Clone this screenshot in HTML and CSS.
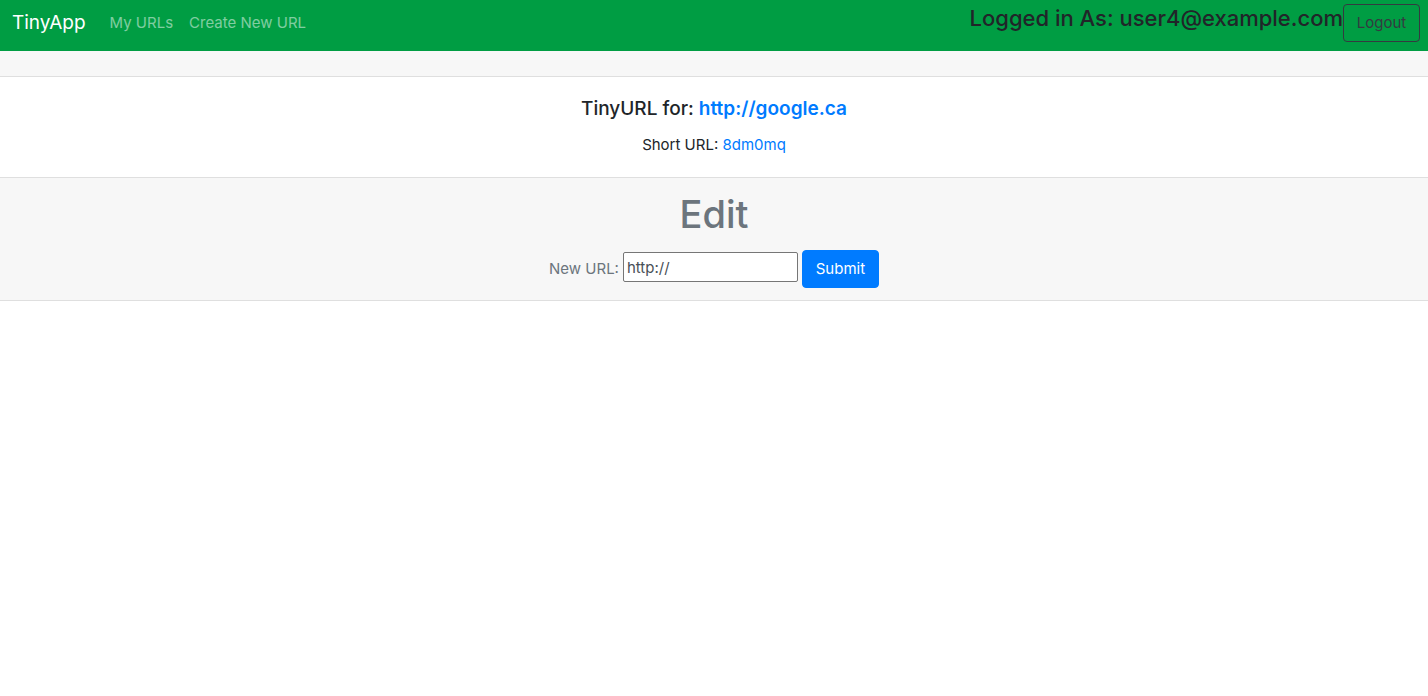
FILE: index.html
```html
<!DOCTYPE html>
<html lang="en">
<head>
<meta charset="utf-8">
<title>TinyApp</title>
<link rel="stylesheet" href="styles.css">
</head>
<body>
<nav class="navbar">
  <div class="nav-left">
    <a class="brand" href="#">TinyApp</a>
    <a class="nav-link" href="#">My URLs</a>
    <a class="nav-link" href="#">Create New URL</a>
  </div>
  <div class="nav-right">
    <h4 class="login-text">Logged in As: user4@example.com</h4>
    <button class="btn-logout" type="button">Logout</button>
  </div>
</nav>
<main class="card">
  <div class="card-header"></div>
  <div class="card-body">
    <h5 class="card-title">TinyURL for: <a href="#" class="link">http://google.ca</a></h5>
    <p class="card-text">Short URL: <a href="#" class="link">8dm0mq</a></p>
  </div>
  <div class="card-footer">
    <h1 class="edit-title">Edit</h1>
    <form class="edit-form">
      <label class="form-label" for="newurl">New URL:</label>
      <input id="newurl" class="url-input" type="text" value="http://">
      <button class="btn-submit" type="submit">Submit</button>
    </form>
  </div>
</main>
</body>
</html>
```
FILE: styles.css
```css
* { box-sizing: border-box; }
html, body { margin: 0; padding: 0; }
body {
  font-family: Inter, "Noto Sans", "Liberation Sans", sans-serif;
  font-size: 16px;
  line-height: 1.5;
  color: #212529;
  background: #fff;
}
a { text-decoration: none; }

.navbar {
  height: 51px;
  background: #009d43;
  display: flex;
  justify-content: space-between;
  align-items: flex-start;
  padding: 4px 8px 0 12px;
}
.nav-left {
  display: flex;
  align-items: center;
  height: 38px;
}
.brand {
  color: #fff;
  font-size: 19px;
  line-height: 30px;
  margin-right: 16px;
}
.nav-link {
  color: rgba(255,255,255,0.5);
  font-size: 15px;
  padding: 0 8px;
  line-height: 24px;
}
.nav-right {
  display: flex;
  align-items: flex-start;
}
.login-text {
  margin: 0;
  font-size: 22px;
  line-height: 29px;
  font-weight: 500;
  color: #212529;
}
.btn-logout {
  font-family: inherit;
  font-size: 15px;
  line-height: 24px;
  height: 38px;
  width: 77px;
  padding: 6px 0;
  color: #343a40;
  background: transparent;
  border: 1px solid #343a40;
  border-radius: 4px;
}

.card {
  display: block;
}
.card-header {
  height: 26px;
  background: #f7f7f7;
  border-bottom: 1px solid #dfdfdf;
}
.card-body {
  padding: 20px;
  text-align: center;
}
.card-title {
  margin: 0 0 12px;
  font-size: 19px;
  line-height: 24px;
  font-weight: 500;
}
.card-title .link { font-weight: 600; }
.card-text {
  margin: 0;
  font-size: 15px;
  line-height: 24px;
}
.link { color: #007bff; }

.card-footer {
  background: #f7f7f7;
  border-top: 1px solid #dfdfdf;
  border-bottom: 1px solid #dfdfdf;
  padding: 12px 20px 12px;
  text-align: center;
  color: #6c757d;
}
.edit-title {
  margin: 0 0 12px;
  font-size: 38px;
  line-height: 48px;
  font-weight: 500;
  color: #6c757d;
}
.edit-form {
  margin: 0;
  height: 38px;
  display: flex;
  justify-content: center;
  align-items: center;
  gap: 4px;
}
.form-label {
  font-size: 15px;
  color: #6c757d;
}
.url-input {
  width: 175px;
  height: 30px;
  margin-top: -4px;
  font-family: inherit;
  font-size: 15px;
  color: #495057;
  padding: 1px 3px;
  border: 1px solid #767676;
  border-radius: 2px;
  background: #fff;
}
.btn-submit {
  font-family: inherit;
  font-size: 15px;
  line-height: 24px;
  width: 77px;
  height: 38px;
  color: #fff;
  background: #007bff;
  border: 1px solid #007bff;
  border-radius: 4px;
  padding: 6px 0;
}
```
